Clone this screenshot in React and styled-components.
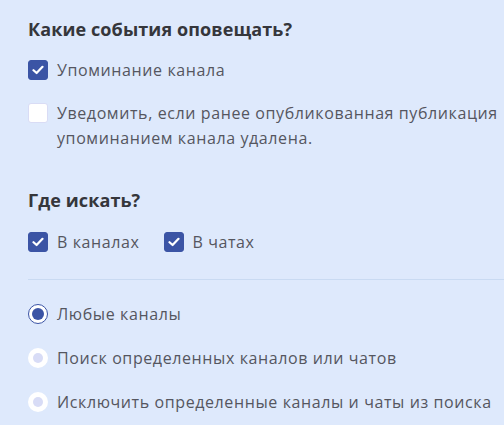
import React from "react";
import styled, { createGlobalStyle } from "styled-components";

const Global = createGlobalStyle`
  html, body { margin: 0; padding: 0; background: #dee9fc; }
  body { font-family: "Open Sans", "Noto Sans", sans-serif; }
`;

const Page = styled.div`
  padding: 16px 0 0 28px;
  color: #55565f;
  font-size: 16px;
  overflow: hidden;
  height: 425px;
  box-sizing: border-box;
`;

const Heading = styled.h2`
  margin: 0;
  font-size: 18px;
  line-height: 26px;
  font-weight: 700;
  color: #35363b;
  letter-spacing: 0.1px;
`;

const Section = styled.section`
  display: flex;
  flex-direction: column;
  margin-top: ${(p) => p.$top || 0}px;
`;

const CheckList = styled.div`
  display: flex;
  flex-direction: ${(p) => (p.$row ? "row" : "column")};
  gap: ${(p) => p.$gap}px;
  margin-top: ${(p) => p.$top}px;
`;

const Label = styled.label`
  display: flex;
  align-items: flex-start;
  gap: 9px;
  line-height: 25px;
  white-space: nowrap;
  cursor: pointer;
`;

const Box = styled.span`
  flex: none;
  width: 20px;
  height: 20px;
  margin-top: 2px;
  box-sizing: border-box;
  border-radius: 3px;
  display: flex;
  align-items: center;
  justify-content: center;
  background: ${(p) => (p.$checked ? "#3b54a5" : "#ffffff")};
  border: 1.5px solid ${(p) => (p.$checked ? "#3b54a5" : "#d9dcf5")};
`;

const Text = styled.span`
  letter-spacing: 0.6px;
`;

const Divider = styled.hr`
  margin: 24px 0 0 0;
  border: none;
  border-top: 1px solid #c9daf2;
`;

const RadioList = styled.div`
  display: flex;
  flex-direction: column;
  gap: 19px;
  margin-top: 22px;
`;

const Radio = styled.span`
  flex: none;
  width: 20px;
  height: 20px;
  box-sizing: border-box;
  border-radius: 50%;
  margin-top: 2px;
  background: #ffffff;
  display: flex;
  align-items: center;
  justify-content: center;
  border: ${(p) => (p.$checked ? "1.5px solid #3b54a5" : "none")};
  &::after {
    content: "";
    width: ${(p) => (p.$checked ? 12 : 10)}px;
    height: ${(p) => (p.$checked ? 12 : 10)}px;
    border-radius: 50%;
    background: ${(p) => (p.$checked ? "#3b54a5" : "#d8dcf6")};
  }
`;

const Check = () => (
  <svg width="12" height="10" viewBox="0 0 12 10">
    <path d="M1.5 5.2 L4.6 8 L10.5 1.8" fill="none" stroke="#fff" strokeWidth="2.2" strokeLinecap="round" strokeLinejoin="round" />
  </svg>
);

const CheckItem = ({ checked, children }) => (
  <Label>
    <Box $checked={checked}>{checked && <Check />}</Box>
    <Text>{children}</Text>
  </Label>
);

const RadioItem = ({ checked, children }) => (
  <Label>
    <Radio $checked={checked} />
    <Text>{children}</Text>
  </Label>
);

export default function App() {
  return (
    <>
      <Global />
      <Page>
        <Section>
          <Heading>Какие события оповещать?</Heading>
          <CheckList $gap={18} $top={16}>
            <CheckItem checked>Упоминание канала</CheckItem>
            <CheckItem>
              Уведомить, если ранее опубликованная публикация
              <br />
              упоминанием канала удалена.
            </CheckItem>
          </CheckList>
        </Section>
        <Section $top={36}>
          <Heading>Где искать?</Heading>
          <CheckList $row $gap={24} $top={17}>
            <CheckItem checked>В каналах</CheckItem>
            <CheckItem checked>В чатах</CheckItem>
          </CheckList>
        </Section>
        <Divider />
        <RadioList>
          <RadioItem checked>Любые каналы</RadioItem>
          <RadioItem>Поиск определенных каналов или чатов</RadioItem>
          <RadioItem>Исключить определенные каналы и чаты из поиска</RadioItem>
        </RadioList>
      </Page>
    </>
  );
}
